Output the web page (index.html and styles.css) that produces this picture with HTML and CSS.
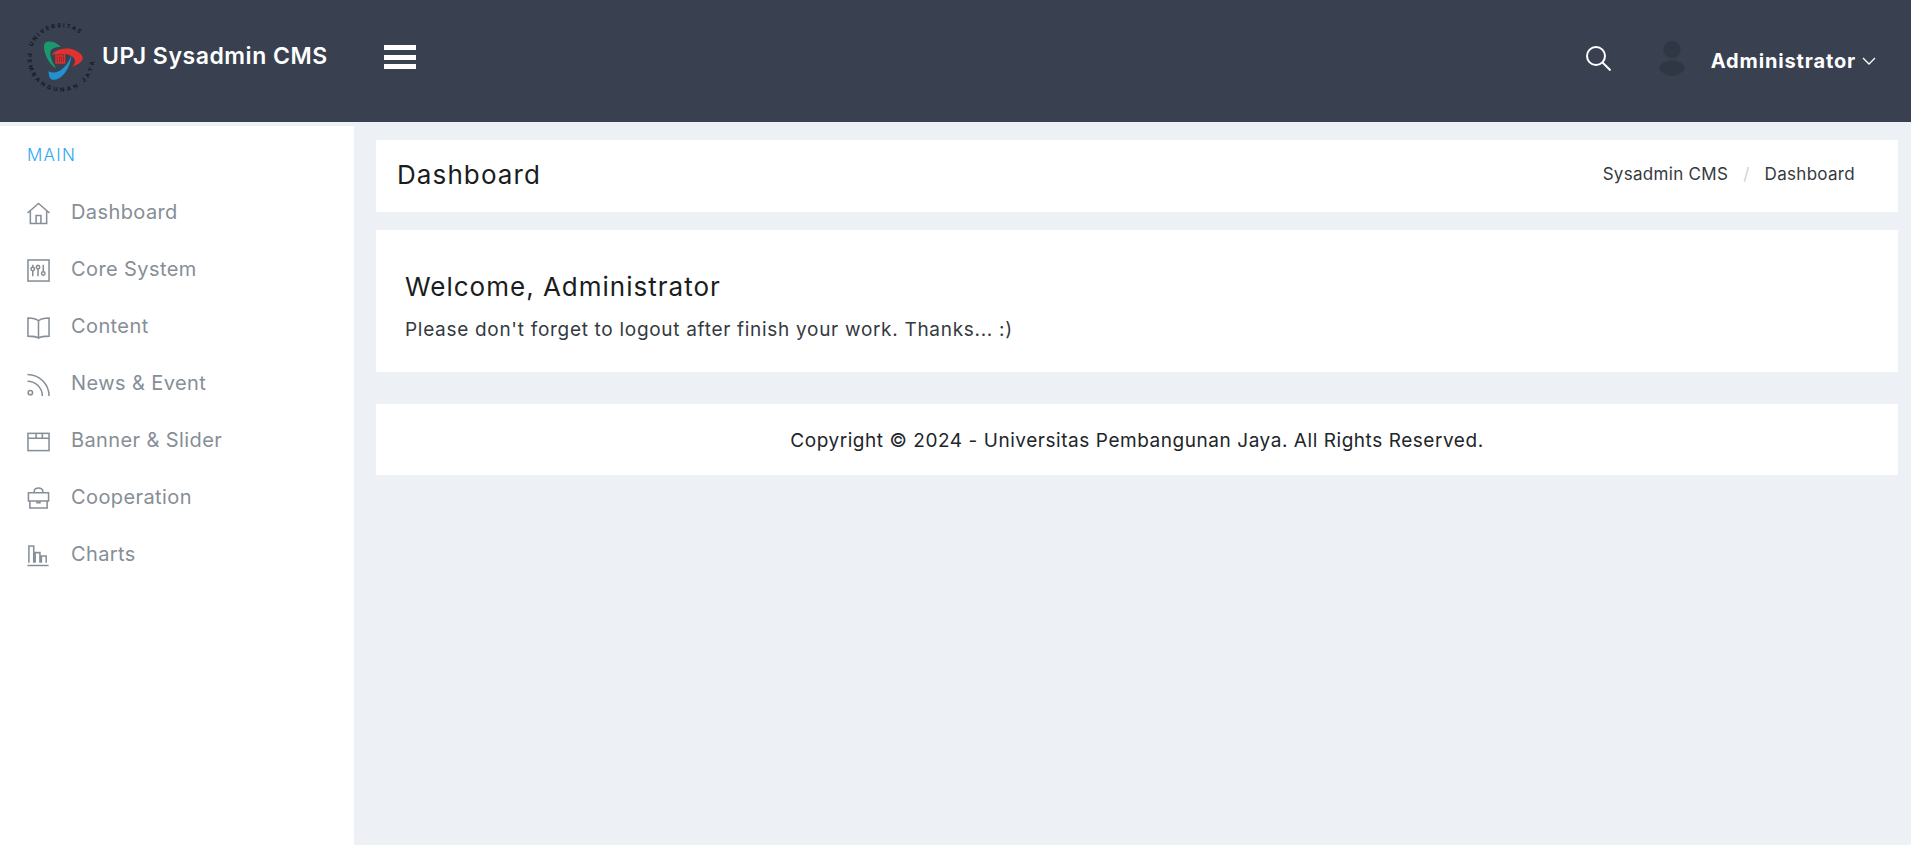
FILE: index.html

```html
<!doctype html>
<html lang="en">

<head>
  <meta charset="utf-8">
  <title>UPJ Sysadmin CMS</title>
  <link rel="stylesheet" href="styles.css">
</head>

<body>
  <header class="topbar">
    <a class="brand" href="#">
      <svg class="brand-logo" viewBox="0 0 72 72" aria-hidden="true">
        <defs>
          <path id="ring-top" d="M3.500 36a32.500 32.500 0 0 1 65 0"/>
          <path id="ring-bottom" d="M1.040 29.800A35.500 35.500 0 1 0 70.960 29.800"/>
        </defs>
        <text class="logo-ring"><textPath href="#ring-top" startOffset="12%">UNIVERSITAS</textPath></text>
        <text class="logo-ring logo-ring-wide"><textPath href="#ring-bottom" startOffset="1%">PEMBANGUNAN JAYA</textPath></text>
        <path fill="#1a9a6c" d="M36 24C30 19 23 17 19 20C16 24 20 40 31 47C25 38 23 30 26 27C28 25 32 24 36 24z"/>
        <path fill="#e2312f" d="M26 33C30 27 38 26 44 26C52 27 58 31 59 36C59 40 54 43 48 45C52 41 52 37 47 34C41 30 32 30 26 33z"/>
        <path fill="#2291cf" d="M47 33C46 46 38 58 29 59C25 60 23 56 22.700 50C28 53 34 51 39 46C43 42 45 38 47 33z"/>
        <rect x="30" y="30.500" width="10.500" height="11.500" fill="#e2312f"/>
        <path fill="none" stroke="#7c2a30" stroke-width=".9" d="M32 40.500V32.500h6.500v8M34.300 40.500V35h2v5.500"/>
      </svg>
      <span class="brand-name">UPJ Sysadmin CMS</span>
    </a>
    <button class="menu-toggle" aria-label="Menu"><span></span><span></span><span></span></button>
    <div class="topbar-right">
      <svg class="search-icon" viewBox="0 0 26 26" aria-hidden="true">
        <circle cx="11" cy="11" r="9"/>
        <path d="M17.500 17.500l8 8"/>
      </svg>
      <svg class="avatar" viewBox="0 0 28 36" aria-hidden="true">
        <circle cx="14" cy="9.500" r="8.500"/>
        <path d="M1 28C3 23 8 20.500 14 20.500S25 23 27 28C24 33 19 35.500 14 35.500S4 33 1 28z"/>
      </svg>
      <span class="user-name">Administrator</span>
      <svg class="caret" viewBox="0 0 14 8" aria-hidden="true"><path d="M1 1l6 6 6-6"/></svg>
    </div>
  </header>

  <div class="layout">
    <aside class="sidebar">
      <div class="sidebar-title">MAIN</div>
      <ul class="side-menu">
        <li>
          <svg viewBox="0 0 24 24"><path d="M.5 11.500L12 1.500l11.500 10M3.500 9.500v13h17v-13M9.500 22.500V14h5v8.500"/></svg>
          <span>Dashboard</span>
        </li>
        <li>
          <svg viewBox="0 0 24 24"><rect x="1" y="1" width="22" height="22"/><path d="M6 6v2.500M6 12.500V18M11.500 6v.5M11.500 10.500V18M17 6v7M17 17v1"/><circle cx="6" cy="10.500" r="1.800"/><circle cx="11.500" cy="8.500" r="1.800"/><circle cx="17" cy="15" r="1.800"/></svg>
          <span>Core System</span>
        </li>
        <li>
          <svg viewBox="0 0 24 24"><path d="M12 5C10 3 6 2 1 2v19c5 0 9 .5 11 2 2-1.500 6-2 11-2V2c-5 0-9 1-11 3zM12 5v18"/></svg>
          <span>Content</span>
        </li>
        <li>
          <svg viewBox="0 0 24 24"><path d="M.5 1.500c12.500 0 22.500 10 22.500 22.500M.5 8.500C9 8.500 16 15.500 16 24"/><circle cx="3.500" cy="20.500" r="2.300"/></svg>
          <span>News &amp; Event</span>
        </li>
        <li>
          <svg viewBox="0 0 24 24"><rect x="1" y="3.500" width="22" height="18"/><path d="M1 8.500h22M9.500 3.500v5M16 3.500v5"/></svg>
          <span>Banner &amp; Slider</span>
        </li>
        <li>
          <svg viewBox="0 0 24 24"><path d="M1.500 6h21v8.500h-21zM3 14.500V22h18v-7.500M7.500 6V4.500C7.500 2.500 9.500 1 12 1s4.500 1.500 4.500 3.500V6M10.500 14.500v2h3v-2"/></svg>
          <span>Cooperation</span>
        </li>
        <li>
          <svg viewBox="0 0 24 24"><path d="M.5 22.500h22M2 19.500V2h5v17.500M8.500 19.500V9h5v10.500M15 19.500V12.500h5v7"/></svg>
          <span>Charts</span>
        </li>
      </ul>
    </aside>

    <main class="content">
      <div class="page-title">
        <h1>Dashboard</h1>
        <ol class="breadcrumb">
          <li>Sysadmin CMS</li>
          <li class="crumb-sep">/</li>
          <li>Dashboard</li>
        </ol>
      </div>

      <section class="card welcome">
        <h2>Welcome, Administrator</h2>
        <p>Please don't forget to logout after finish your work. Thanks... :)</p>
      </section>

      <footer class="card site-footer">Copyright © 2024 - Universitas Pembangunan Jaya. All Rights Reserved.</footer>
    </main>
  </div>
</body>

</html>
```

FILE: styles.css

```css
* { box-sizing:border-box; }
html, body { height:100%; }
body { margin:0; background-color:#edf0f5; color:#212529; font-family:"Inter","Open Sans",sans-serif; overflow:hidden; }

.topbar { display:flex; align-items:center; height:122px; background-color:#394150; color:#fff; }
.brand { display:flex; align-items:center; width:384px; padding:0 0 10px 27px; color:#fff; text-decoration:none; }
.brand-logo { width:68px; height:68px; flex:none; margin:4px 0 0 0; overflow:visible; }
.logo-ring { font-size:6px; font-weight:700; letter-spacing:2px; fill:#14181f; }
.logo-ring-wide { letter-spacing:3.100px; }
.brand-name { font-size:23px; font-weight:600; letter-spacing:.55px; white-space:nowrap; margin-left:7px; }
.menu-toggle { display:flex; flex-direction:column; gap:4.500px; width:32px; padding:0; border:0; background:none; margin-bottom:8px; }
.menu-toggle span { display:block; height:5px; background-color:#fff; }
.topbar-right { display:flex; align-items:center; margin-left:auto; padding-right:35px; }
.search-icon { width:26px; height:26px; fill:none; stroke:#fff; stroke-width:2; margin-right:47px; margin-bottom:6px; }
.avatar { width:28px; height:36px; fill:#2f3744; stroke:#333b48; margin-right:25px; margin-bottom:6px; }
.user-name { font-size:20px; font-weight:700; letter-spacing:.85px; }
.caret { width:14px; height:8px; fill:none; stroke:#fff; stroke-width:1.300; margin-left:6px; }

.layout { display:flex; height:calc(100% - 122px); }
.sidebar { width:354px; flex:none; margin-top:4px; background-color:#fff; padding:19px 0 0 27px; }
.sidebar-title { font-size:17px; font-weight:300; letter-spacing:1.300px; line-height:20px; color:#2ea7f2; margin-bottom:18px; }
.side-menu { list-style:none; margin:0; padding:0; }
.side-menu li { display:flex; align-items:center; height:57px; font-size:20px; letter-spacing:.4px; color:#868e96; }
.side-menu svg { width:23px; height:23px; flex:none; margin:3px 21px 0 0; fill:none; stroke:#868e96; stroke-width:1.600; }

.content { flex:1; padding:18px 13px 0 22px; }
.page-title { display:flex; justify-content:space-between; align-items:center; height:72px; padding:0 43px 4px 21px; background-color:#fff; margin-bottom:18px; }
h1 { margin:0; font-size:26px; font-weight:400; letter-spacing:1.100px; color:#1a1d20; }
.breadcrumb { display:flex; list-style:none; margin:0; padding:0; font-size:17px; letter-spacing:.3px; color:#343a40; }
.crumb-sep { margin:0 15px; color:#ced4da; }
.card { background-color:#fff; }
.welcome { height:142px; padding:42px 29px 0; margin-bottom:32px; }
h2 { margin:0 0 14px; font-size:26px; font-weight:400; letter-spacing:1px; line-height:30px; color:#1a1d20; }
.welcome p { margin:0; font-size:19px; letter-spacing:.7px; line-height:28px; color:#343a40; }
.site-footer { height:71px; display:flex; align-items:center; justify-content:center; padding-top:2px; font-size:19px; letter-spacing:.55px; color:#212529; }
```
